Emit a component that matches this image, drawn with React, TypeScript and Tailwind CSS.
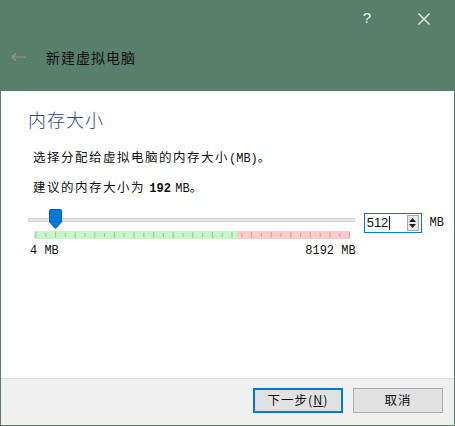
import React from "react";

const cjk = "font-['Noto_Sans_CJK_SC','Noto_Sans',sans-serif]";
const mono = "font-['Liberation_Mono','Noto_Sans_CJK_SC',monospace]";

function TickBar() {
  const ticks = Array.from({ length: 33 }, (_, i) => 2 + i * 9.8);
  return (
    <svg width="316" height="8" className="block">
      <rect x="0" y="0" width="203" height="8" fill="#c8f5c8" />
      <rect x="203" y="0" width="113" height="8" fill="#fbcaca" />
      {ticks.map((x, i) => (
        <line
          key={i}
          x1={x}
          x2={x}
          y1={i % 2 === 0 ? 1 : 2}
          y2={i % 2 === 0 ? 7 : 6}
          stroke={x < 203 ? "#8fc98f" : "#d99a9a"}
          strokeWidth="1"
        />
      ))}
    </svg>
  );
}

export default function App() {
  return (
    <div className={`w-[455px] h-[426px] bg-[#587e6c] flex flex-col ${cjk}`}>
      {/* Title bar */}
      <header className="h-[91px] flex flex-col shrink-0">
        <div className="h-[37px] flex items-center justify-end">
          <span className="text-[15px] text-[#e8eeea] mr-[47px] font-['Liberation_Sans',sans-serif]">?</span>
          <svg width="12" height="12" className="mr-[25px]">
            <path d="M0.5 0.5 L11.5 11.5 M11.5 0.5 L0.5 11.5" stroke="#eef2ef" strokeWidth="1.3" />
          </svg>
        </div>
        <div className="flex items-center h-[40px] pl-[11px]">
          <svg width="16" height="10" className="mr-[19px]">
            <path d="M1 5 H15 M1 5 L5 1.5 M1 5 L5 8.5" stroke="#a18f8f" strokeWidth="1.2" fill="none" />
          </svg>
          <span className="text-[14px] text-[#111] tracking-[1px]">新建虚拟电脑</span>
        </div>
      </header>

      {/* Content */}
      <main className="flex-1 bg-white mx-px flex flex-col pl-[27px] pr-[10px]">
        <h1 className="mt-[16px] text-[18px] leading-[24px] text-[#2b4a8c] font-light tracking-[1px]">内存大小</h1>
        <p className="mt-[18px] ml-[5px] text-[12.5px] leading-[16px] text-[#111] tracking-[1.5px]">
          选择分配给虚拟电脑的内存大小<span className={`${mono} text-[12px] tracking-normal`}>(MB)</span>。
        </p>
        <p className="mt-[12px] ml-[5px] text-[12.5px] leading-[16px] text-[#111] tracking-[1.5px]">
          建议的内存大小为 <span className={`${mono} font-bold text-[12px] tracking-normal`}>192</span>{" "}
          <span className={`${mono} text-[12px] tracking-normal`}>MB</span>。
        </p>

        <div className="mt-[11px] flex">
          {/* slider column */}
          <div className="w-[329px] flex flex-col">
            <div className="relative h-[22px]">
              <div className="absolute left-0 right-[2px] top-[10px] h-[4px] bg-[#e7e7e7] border border-[#d2d2d2] rounded-[1px]" />
              <svg width="13" height="20" className="absolute left-[21px] top-[1px]">
                <path d="M0.5 1.5 Q0.5 0.5 1.5 0.5 H11.5 Q12.5 0.5 12.5 1.5 V13 L6.5 19.5 L0.5 13 Z" fill="#0078d7" stroke="#0063b1" strokeWidth="1" />
              </svg>
            </div>
            <div className="ml-[6px] mt-[1px]">
              <TickBar />
            </div>
            <div className={`mt-[5px] flex justify-between ${mono} text-[12px] leading-[14px] text-[#111] pl-[2px] pr-[1px]`}>
              <span>4 MB</span>
              <span>8192 MB</span>
            </div>
          </div>

          {/* spin box */}
          <div className="ml-[7px] mt-[5px] w-[58px] h-[20px] border border-[#0078d7] bg-white flex items-center">
            <span className="pl-[2px] text-[13px] leading-[16px] text-[#111] font-['Liberation_Sans',sans-serif]">512</span>
            <span className="w-px h-[14px] bg-[#111] ml-[1px]" />
            <div className="ml-auto mr-[2px] w-[12px] h-[16px] border border-[#a8a8a8] bg-[#e8e8e8] flex flex-col items-center justify-center gap-[2px]">
              <svg width="7" height="4"><path d="M0 4 L3.5 0 L7 4 Z" fill="#222" /></svg>
              <svg width="7" height="4"><path d="M0 0 L3.5 4 L7 0 Z" fill="#222" /></svg>
            </div>
          </div>
          <span className={`ml-[8px] mt-[8px] ${mono} text-[12px] leading-[14px] text-[#111]`}>MB</span>
        </div>
      </main>

      {/* Footer */}
      <footer className="h-[47px] bg-[#f0f0f0] mx-px mb-px border-t border-[#dfdfdf] flex items-start justify-end gap-[10px] pt-[9px] pr-[11px] shrink-0">
        <button className="w-[90px] h-[25px] bg-[#e1e1e1] border-2 border-[#0078d7] text-[12.5px] text-[#111] tracking-[1px] flex items-center justify-center">
          下一步(<span className="underline">N</span>)
        </button>
        <button className="w-[90px] h-[25px] bg-[#e1e1e1] border border-[#adadad] text-[12.5px] text-[#111] tracking-[1px] flex items-center justify-center">
          取消
        </button>
      </footer>
    </div>
  );
}
